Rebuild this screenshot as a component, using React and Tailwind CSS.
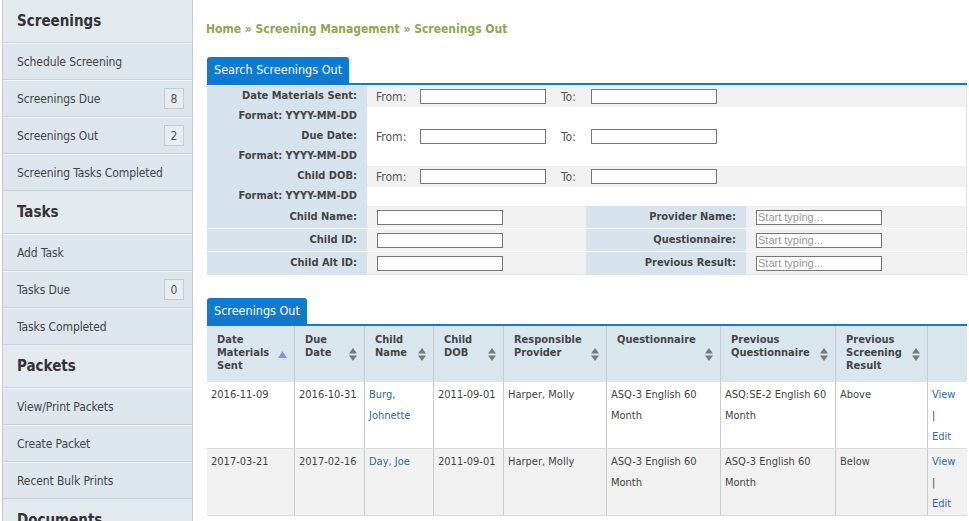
import { Fragment } from "react";

const font = "font-['DejaVu_Sans_Condensed','Liberation_Sans',sans-serif]";

const sidebar = [
  {
    title: "Screenings",
    items: [
      { label: "Schedule Screening" },
      { label: "Screenings Due", count: 8 },
      { label: "Screenings Out", count: 2 },
      { label: "Screening Tasks Completed" },
    ],
  },
  {
    title: "Tasks",
    items: [
      { label: "Add Task" },
      { label: "Tasks Due", count: 0 },
      { label: "Tasks Completed" },
    ],
  },
  {
    title: "Packets",
    items: [
      { label: "View/Print Packets" },
      { label: "Create Packet" },
      { label: "Recent Bulk Prints" },
    ],
  },
  { title: "Documents", items: [] },
];

const columns = [
  { label: ["Date", "Materials", "Sent"], w: "w-[87px]", sort: "asc" },
  { label: ["Due", "Date"], w: "w-[70px]", sort: "both" },
  { label: ["Child", "Name"], w: "w-[69px]", sort: "both" },
  { label: ["Child", "DOB"], w: "w-[70px]", sort: "both" },
  { label: ["Responsible", "Provider"], w: "w-[103px]", sort: "both" },
  { label: ["Questionnaire"], w: "w-[114px]", sort: "both" },
  { label: ["Previous", "Questionnaire"], w: "w-[115px]", sort: "both" },
  { label: ["Previous", "Screening", "Result"], w: "w-[92px]", sort: "both" },
  { label: [], w: "w-[40px]", sort: null },
];

const rows = [
  {
    sent: "2016-11-09",
    due: "2016-10-31",
    child: ["Burg,", "Johnette"],
    dob: "2011-09-01",
    provider: "Harper, Molly",
    q: ["ASQ-3 English 60", "Month"],
    prev: ["ASQ:SE-2 English 60", "Month"],
    result: "Above",
  },
  {
    sent: "2017-03-21",
    due: "2017-02-16",
    child: ["Day, Joe"],
    dob: "2011-09-01",
    provider: "Harper, Molly",
    q: ["ASQ-3 English 60", "Month"],
    prev: ["ASQ-3 English 60", "Month"],
    result: "Below",
  },
];

function SortIcon({ dir }) {
  if (dir === "asc") {
    return (
      <svg width="9" height="7" viewBox="0 0 9 7">
        <path d="M4.5 0 L9 7 L0 7 Z" fill="#8b90d8" />
      </svg>
    );
  }
  return (
    <svg width="8" height="13" viewBox="0 0 8 13">
      <path d="M4 0 L8 5.5 L0 5.5 Z" fill="#777" />
      <path d="M4 13 L8 7.5 L0 7.5 Z" fill="#777" />
    </svg>
  );
}

function Tab({ children }) {
  return (
    <div className="flex">
      <div className="bg-[#0e7ad0] text-white text-[12.5px] leading-[26px] px-[7px] rounded-t-[3px]">
        {children}
      </div>
    </div>
  );
}

function DateRange({ shaded }) {
  return (
    <div className={`flex items-center h-[21px] ${shaded ? "bg-[#f1f1f1]" : "bg-white"}`}>
      <span className="ml-[9px] w-[44px] text-[#555]">From:</span>
      <input className="w-[126px] h-[15px] border border-[#777] bg-white" />
      <span className="ml-[15px] w-[30px] text-[#555]">To:</span>
      <input className="w-[126px] h-[15px] border border-[#777] bg-white" />
    </div>
  );
}

function Label({ children, h = "h-[19px]" }) {
  return (
    <div className={`${h} bg-[#d6e3ec] flex items-center justify-end pr-[10px] font-bold text-[11px] text-[#444]`}>
      {children}
    </div>
  );
}

export default function App() {
  return (
    <div className={`flex bg-white min-h-[521px] text-[12px] ${font}`}>
      {/* Sidebar */}
      <div className="w-[191px] ml-[2px] border-x border-[#c7ced3] bg-[#dce6ec] shrink-0">
        {sidebar.map((s) => (
          <Fragment key={s.title}>
            <div className="h-[43px] flex items-center pl-[14px] pt-[1px] bg-[#e3eaee] border-b border-[#c9d2d8] text-[15px] font-bold text-[#333]">
              {s.title}
            </div>
            {s.items.map((it) => (
              <div
                key={it.label}
                className="h-[37px] flex items-center justify-between pl-[14px] pr-[8px] border-t border-[#f3f6f8] border-b border-b-[#c9d2d8] text-[#444] tracking-[-0.1px]"
              >
                <span>{it.label}</span>
                {it.count !== undefined && (
                  <span className="w-[20px] h-[21px] flex items-center justify-center border border-[#c4ccd1] bg-[#e6edf1] text-[#555]">
                    {it.count}
                  </span>
                )}
              </div>
            ))}
          </Fragment>
        ))}
      </div>

      {/* Main */}
      <div className="ml-[13px] w-[761px] pt-[21px]">
        <div className="text-[12px] font-bold text-[#8fa84f] h-[16px] leading-[16px]">
          Home » Screening Management » Screenings Out
        </div>

        <div className="mt-[20px] pl-[1px]">
          <Tab>Search Screenings Out</Tab>
          <div className="border-t-2 border-[#0e7ad0]">
            <div className="border-t border-t-white border-b border-r border-[#e3e6e8]">
              <div className="grid grid-cols-[160px_1fr]">
                <Label h="h-[21px]">Date Materials Sent:</Label>
                <DateRange shaded />
                <Label>Format: YYYY-MM-DD</Label>
                <div className="h-[19px]" />
                <Label h="h-[21px]">Due Date:</Label>
                <DateRange />
                <Label>Format: YYYY-MM-DD</Label>
                <div className="h-[19px]" />
                <Label h="h-[21px]">Child DOB:</Label>
                <DateRange shaded />
                <Label>Format: YYYY-MM-DD</Label>
                <div className="h-[18px]" />
              </div>
              {[
                ["Child Name:", "Provider Name:"],
                ["Child ID:", "Questionnaire:"],
                ["Child Alt ID:", "Previous Result:"],
              ].map(([a, b], i) => (
                <div
                  key={a}
                  className={`grid grid-cols-[160px_219px_160px_1fr] ${i > 0 ? "border-t border-white" : ""}`}
                >
                  <Label h="h-[22px]">{a}</Label>
                  <div className="bg-[#f1f1f1] flex items-center pl-[10px]">
                    <input className="w-[126px] h-[15px] border border-[#777] bg-white" />
                  </div>
                  <Label h="h-[22px]">{b}</Label>
                  <div className="bg-[#f1f1f1] flex items-center pl-[10px]">
                    <input
                      placeholder="Start typing..."
                      className="w-[126px] h-[15px] border border-[#777] bg-white text-[11px] px-[1px] placeholder:text-[#999] font-['Liberation_Sans',sans-serif]"
                    />
                  </div>
                </div>
              ))}
            </div>
          </div>
        </div>

        <div className="mt-[23px] pl-[1px]">
          <Tab>Screenings Out</Tab>
          <div className="border-t-2 border-[#0e7ad0]">
            <div className="flex bg-[#dae6ee] h-[56px]">
              {columns.map((c, i) => (
                <div
                  key={i}
                  className={`${c.w} shrink-0 flex items-center justify-between pl-[10px] pr-[7px] ${i > 0 ? "border-l border-[#c5cbcf]" : ""}`}
                >
                  <div className="font-bold text-[11px] text-[#444] leading-[13px] self-start pt-[7px]">
                    {c.label.map((l) => (
                      <div key={l}>{l}</div>
                    ))}
                  </div>
                  {c.sort && <SortIcon dir={c.sort} />}
                </div>
              ))}
            </div>
            {rows.map((r, ri) => (
              <div
                key={r.sent}
                className={`flex h-[67px] text-[11px] text-[#444] leading-[21px] border-b border-[#dcdcdc] ${ri % 2 ? "bg-[#f1f1f1]" : "bg-white"}`}
              >
                {[
                  [r.sent],
                  [r.due],
                  r.child,
                  [r.dob],
                  [r.provider],
                  r.q,
                  r.prev,
                  [r.result],
                  null,
                ].map((lines, ci) => (
                  <div
                    key={ci}
                    className={`${columns[ci].w} shrink-0 pl-[4px] pt-[2px] ${ci > 0 ? "border-l border-[#c5cbcf]" : ""} ${ci === 2 ? "text-[#2f6aa5]" : ""}`}
                  >
                    {lines
                      ? lines.map((l) => <div key={l}>{l}</div>)
                      : (
                        <div className="text-[#2f6aa5]">
                          <div>View</div>
                          <div className="text-[#444]">|</div>
                          <div>Edit</div>
                        </div>
                      )}
                  </div>
                ))}
              </div>
            ))}
          </div>
        </div>
      </div>
    </div>
  );
}
